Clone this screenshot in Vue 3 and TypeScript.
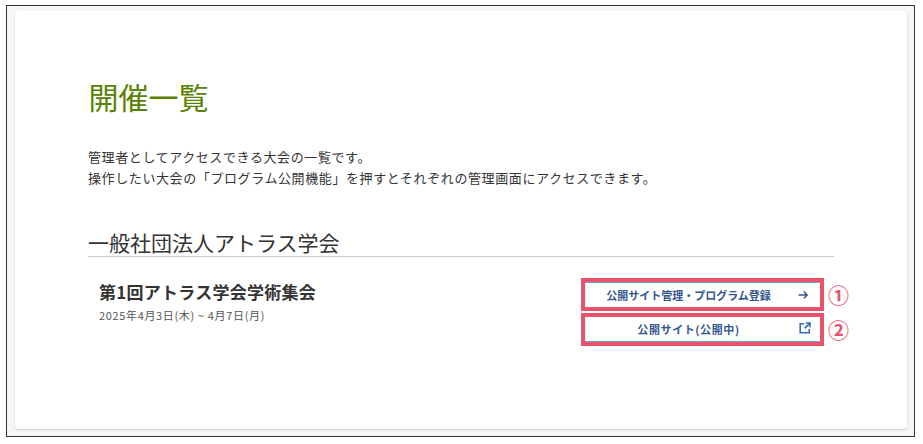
<script setup lang="ts">
const title = '開催一覧'
const lines = [
  '管理者としてアクセスできる大会の一覧です。',
  '操作したい大会の「プログラム公開機能」を押すとそれぞれの管理画面にアクセスできます。',
]
</script>

<template>
  <div class="shot">
    <div class="frame">
      <main class="card">
        <h1 class="title">{{ title }}</h1>
        <p class="lead"><template v-for="l in lines" :key="l">{{ l }}<br /></template></p>
        <h2 class="org">一般社団法人アトラス学会</h2>
        <section class="event">
          <div class="info">
            <div class="name">第1回アトラス学会学術集会</div>
            <div class="date">2025年4月3日(木) ~ 4月7日(月)</div>
          </div>
          <div class="actions">
            <div class="row">
              <a class="mark">
                <span class="btn top">
                  <span class="label">公開サイト管理・プログラム登録</span>
                  <svg class="ico" viewBox="0 0 12 12" width="12" height="12" fill="none" stroke="#33568f" stroke-width="1.4">
                    <path d="M1.5 6H10.2M6.8 2.6 10.2 6 6.8 9.4" />
                  </svg>
                </span>
              </a>
              <span class="num">①</span>
            </div>
            <div class="row">
              <a class="mark">
                <span class="btn bottom">
                  <span class="label wide">公開サイト(公開中)</span>
                  <svg class="ico ext" viewBox="0 0 12 12" width="12" height="12" fill="none" stroke="#2f6fb5" stroke-width="1.6">
                    <path d="M5 1.7H1.2V10.8H10.3V7M6.8 1H11V5.2M11 1 5.6 6.4" />
                  </svg>
                </span>
              </a>
              <span class="num">②</span>
            </div>
          </div>
        </section>
      </main>
    </div>
  </div>
</template>

<style>
html, body { margin: 0; background: #fff; }
</style>

<style scoped>
.shot {
  width: 923px;
  height: 444px;
  padding: 5px 8px 7px 6px;
  box-sizing: border-box;
  font-family: "Noto Sans CJK JP", "Noto Sans", sans-serif;
  color: #333;
}
.frame {
  height: 100%;
  box-sizing: border-box;
  border: 1px solid #333;
  background: #f5f6f6;
  padding: 5px 7px 7px 8px;
}
.card {
  height: 100%;
  box-sizing: border-box;
  background: #fff;
  border-radius: 3px;
  box-shadow: 0 1px 2px rgba(0, 0, 0, .18);
  padding: 63px 73px 0 73px;
}
.title {
  margin: 0 0 0 .5px;
  font-size: 30px;
  line-height: 44px;
  font-weight: 400;
  color: #588200;
}
.lead {
  margin: 28px 0 0;
  font-size: 13px;
  line-height: 21px;
  letter-spacing: .6px;
  color: #333;
}
.org {
  margin: 40px 0 0;
  font-size: 21px;
  line-height: 28px;
  font-weight: 400;
  color: #333;
  border-bottom: 1px solid #c4d0cd;
}
.event {
  display: flex;
  justify-content: space-between;
  margin-top: 21px;
  padding-left: 11px;
}
.name {
  font-size: 17px;
  line-height: 28px;
  font-weight: 700;
  letter-spacing: .25px;
  color: #333;
}
.date {
  margin-top: 1px;
  font-size: 11px;
  line-height: 16px;
  color: #555;
  letter-spacing: .65px;
}
.actions {
  display: flex;
  flex-direction: column;
  gap: 2px;
  margin-right: -14px;
}
.row {
  display: flex;
  align-items: center;
  gap: 4px;
}
.mark {
  display: block;
  width: 243px;
  height: 33px;
  box-sizing: border-box;
  border: 4px solid #e9526a;
}
.btn {
  display: flex;
  align-items: center;
  height: 100%;
  box-sizing: border-box;
  padding: 0 11px 0 0;
  background: #fff;
}
.btn.top { border-top: 1px solid #7aa0d8; }
.btn.bottom { border-bottom: 1px solid #7aa0d8; }
.label {
  flex: 1;
  text-align: center;
  font-size: 11px;
  font-weight: 700;
  color: #33568f;
  margin-right: 5px;
}
.label.wide { letter-spacing: .6px; }
.ico { flex: none; }
.ext { transform: translate(2px, -1px); }
.num {
  width: 20px;
  font-size: 21px;
  font-weight: 700;
  line-height: 1;
  color: #e9526a;
}
</style>
